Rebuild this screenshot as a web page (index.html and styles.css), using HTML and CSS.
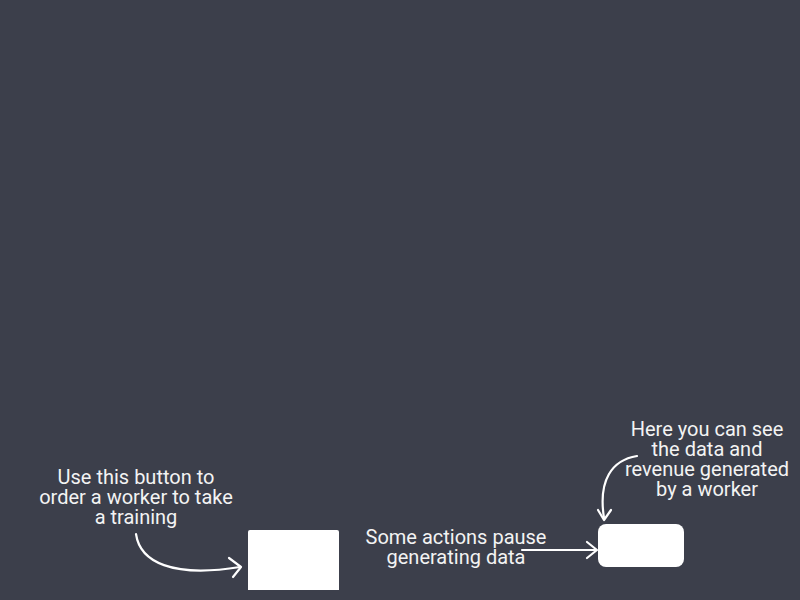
FILE: index.html
```html
<!DOCTYPE html>
<html lang="en">
<head>
    <meta charset="UTF-8">
    <meta name="viewport" content="width=device-width, initial-scale=1.0">
    <title>Worker tutorial</title>
    <link rel="stylesheet" href="styles.css">
</head>
<body>
    <div class="stage">
        <svg class="arrows" width="800" height="600" viewBox="0 0 800 600">
            <path d="M136 534 C 140 562, 172 578, 240 567"/>
            <path d="M229 558 L241 567 L233 577"/>
            <path d="M522 550 L596 550"/>
            <path d="M587 542 L597 550 L587 558"/>
            <path d="M637 456 C 612 460, 598 480, 604 518"/>
            <path d="M598 510 L604 520 L611 510"/>
        </svg>

        <p class="hint hint-training">Use this button to<br>order a worker to take<br>a training</p>
        <p class="hint hint-pause">Some actions pause<br>generating data</p>
        <p class="hint hint-revenue">Here you can see<br>the data and<br>revenue generated<br>by a worker</p>

        <div class="target target-training"></div>
        <div class="target target-stats"></div>
    </div>
</body>
</html>
```

FILE: styles.css
```css
body {
    margin: 0;
    background-color: #3c3f4b;
    font-family: Roboto, "Liberation Sans", sans-serif;
    overflow: hidden;
}

.stage {
    position: relative;
    width: 800px;
    height: 600px;
}

.arrows {
    position: absolute;
    left: 0;
    top: 0;
}

.arrows path {
    fill: none;
    stroke: #ffffff;
    stroke-width: 2.2;
    stroke-linecap: round;
    stroke-linejoin: round;
}

.hint {
    position: absolute;
    margin: 0;
    color: #f3f3f3;
    font-size: 20px;
    line-height: 20px;
    text-align: center;
    white-space: nowrap;
    transform: translateX(-50%);
}

.hint-training {
    left: 136px;
    top: 467px;
}

.hint-pause {
    left: 456px;
    top: 527px;
}

.hint-revenue {
    left: 707px;
    top: 419px;
}

.target {
    position: absolute;
    background-color: #ffffff;
}

.target-training {
    left: 248px;
    top: 530px;
    width: 91px;
    height: 60px;
    border-radius: 2px 2px 0 0;
}

.target-stats {
    left: 598px;
    top: 524px;
    width: 86px;
    height: 43px;
    border-radius: 8px;
}
```
